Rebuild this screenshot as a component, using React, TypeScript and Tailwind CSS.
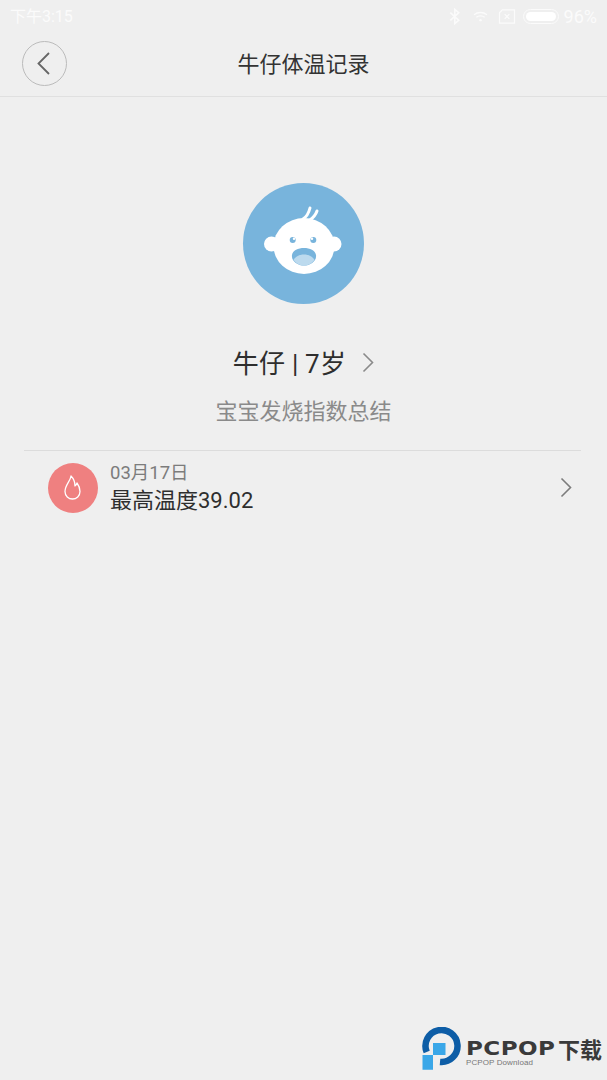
import React from "react";

const cjk = "font-['Roboto','Noto_Sans_CJK_SC',sans-serif]";

function Chevron({ className }: { className?: string }) {
  return (
    <svg viewBox="0 0 12 20" fill="none" className={className}>
      <path d="M1.5 1L10.5 10L1.5 19" stroke="currentColor" strokeWidth="1.6" />
    </svg>
  );
}

function StatusBar() {
  return (
    <div className="flex h-8 items-center justify-between pl-[10px] pr-[10px] pt-[1px] text-[#fbfbfb]">
      <span className="text-[16px] leading-none">下午3:15</span>
      <div className="flex items-center">
        <svg viewBox="0 0 12 18" className="h-[17px] w-[12px]" fill="none" stroke="currentColor" strokeWidth="1.7">
          <path d="M1 5L10 13L5.8 16.5V1.5L10 5L1 13" />
        </svg>
        <svg viewBox="0 0 16 12" className="ml-[12px] h-[11px] w-[15px]" fill="none" stroke="currentColor" strokeWidth="1.4">
          <path d="M1 4.2C5 .8 11 .8 15 4.2M3.5 6.8C6 4.8 10 4.8 12.5 6.8" />
          <circle cx="8" cy="10" r="1.3" fill="currentColor" stroke="none" />
        </svg>
        <svg viewBox="0 0 18 16" className="ml-[10px] h-[15px] w-[18px]" fill="none" stroke="currentColor" strokeWidth="1.3">
          <path d="M4 1H17V15H1V4Z" />
          <path d="M6.5 5.5L11.5 10.5M11.5 5.5L6.5 10.5" />
        </svg>
        <div className="ml-[7px] flex h-[15px] w-[36px] items-center rounded-full border border-[#fbfbfb] p-[2px]">
          <div className="h-full w-full rounded-full bg-white" />
        </div>
        <span className="ml-[5px] text-[18px] leading-none">96%</span>
      </div>
    </div>
  );
}

function Header() {
  return (
    <div className="relative flex h-[65px] items-center justify-center border-b border-[#e0e0e0] pt-[1px]">
      <button className="absolute left-[22px] top-[9px] flex h-[45px] w-[45px] items-center justify-center rounded-full border border-[#bbbbbb] pr-[3px]">
        <svg viewBox="0 0 13 23" fill="none" className="h-[23px] w-[13px] text-[#666]">
          <path d="M12 1L1.5 11.5L12 22" stroke="currentColor" strokeWidth="1.8" />
        </svg>
      </button>
      <h1 className="text-[22px] leading-none text-[#333]">牛仔体温记录</h1>
    </div>
  );
}

function BabyFace() {
  return (
    <div className="h-[121px] w-[121px] rounded-full bg-[#78b4dc]">
      <svg viewBox="0 0 121 121" className="h-full w-full">
        <ellipse cx="61" cy="63" rx="30.5" ry="28" fill="#fff" />
        <circle cx="28.5" cy="61" r="7.5" fill="#fff" />
        <circle cx="91" cy="61" r="7.5" fill="#fff" />
        <path d="M60 36C65 33 66 29 67 25M67 37C71 34 73 31 74 28" stroke="#fff" strokeWidth="3" fill="none" strokeLinecap="round" />
        {/* eyes */}
        <circle cx="49.7" cy="57" r="3" fill="#78b4dc" />
        <circle cx="51" cy="55.8" r="1.2" fill="#fff" />
        <circle cx="70.3" cy="57" r="3" fill="#78b4dc" />
        <circle cx="69" cy="55.8" r="1.2" fill="#fff" />
        {/* mouth */}
        <path d="M49 72C50 62.5 72 62.5 73 72C74 78 67 82.5 61 82.5C55 82.5 48 78 49 72Z" fill="#78b4dc" />
        <path d="M50.5 77C54 69.5 68 69.5 71.5 77C68.5 81 65 82.5 61 82.5C57 82.5 53.5 81 50.5 77Z" fill="#bcdaee" />
      </svg>
    </div>
  );
}

function Flame() {
  return (
    <svg viewBox="0 0 17 25" fill="none" className="mr-[2px] h-[25px] w-[17px]">
      <path
        d="M7 1C6.5 6 1 10 1 16.5C1 21 4.5 24 8.5 24C12.5 24 16 21 16 16.5C16 12.5 14.5 10 13 8C12.6 9.5 12 10.5 11 11C11 7 9.5 3.5 7 1Z"
        stroke="#fff"
        strokeWidth="1.3"
        strokeLinejoin="round"
      />
    </svg>
  );
}

function Watermark() {
  return (
    <div className="absolute bottom-[9px] left-[422px] flex items-start">
      <svg viewBox="0 0 40 44" className="h-[44px] w-[40px]">
        <path d="M4.7 25A16 16 0 1 1 18 34.9" fill="none" stroke="#0d5da6" strokeWidth="6.5" />
        <path d="M11 16H23.5V28H11V42.7H.5V28H11Z" fill="#3aa7e8" />
      </svg>
      <div className="ml-[4px] mt-[10px] flex flex-col">
        <div className="flex items-center leading-[22px] text-[#3a3a3a]">
          <span className="w-[92px] origin-left scale-x-[1.15] whitespace-nowrap text-[20px] font-bold tracking-[0.4px] [font-family:'DejaVu_Sans',sans-serif]">
            PCPOP
          </span>
          <span className="text-[22px] font-bold [font-family:'Noto_Sans_CJK_SC',sans-serif]">下载</span>
        </div>
        <span className="-mt-[1px] text-[8px] leading-[10px] tracking-[0.1px] text-[#777] [font-family:'Liberation_Sans',sans-serif]">
          PCPOP Download
        </span>
      </div>
    </div>
  );
}

export default function App() {
  return (
    <div className={`relative h-[1080px] w-[607px] overflow-hidden bg-[#efefef] ${cjk}`}>
      <StatusBar />
      <Header />

      <div className="flex flex-col items-center pt-[86px]">
        <BabyFace />
        <div className="mt-[42px] flex h-[36px] items-center">
          <span className="text-[26px] leading-none tracking-[0.2px] text-[#2e2e2e]">牛仔 | 7岁</span>
          <Chevron className="-mt-[3px] ml-[16px] h-[21px] w-[12px] text-[#8a8a8a]" />
        </div>
        <p className="mt-[17px] text-[22px] leading-[26px] text-[#8a8a8a]">宝宝发烧指数总结</p>
      </div>

      <div className="ml-[24px] mr-[26px] mt-[25px] flex items-center border-t border-[#dcdcdc] pl-[24px] pr-[9px] pt-[11px]">
        <div className="mb-[2px] flex h-[50px] w-[50px] items-center justify-center rounded-full bg-[#ef8080]">
          <Flame />
        </div>
        <div className="ml-[12px] flex flex-1 flex-col">
          <span className="text-[18.5px] leading-[22px] text-[#7c7c7c]">03月17日</span>
          <span className="mt-[3px] text-[22px] leading-[28px] text-[#2e2e2e]">最高温度39.02</span>
        </div>
        <Chevron className="mb-[2px] h-[21px] w-[12px] text-[#7c7c7c]" />
      </div>

      <Watermark />
    </div>
  );
}
